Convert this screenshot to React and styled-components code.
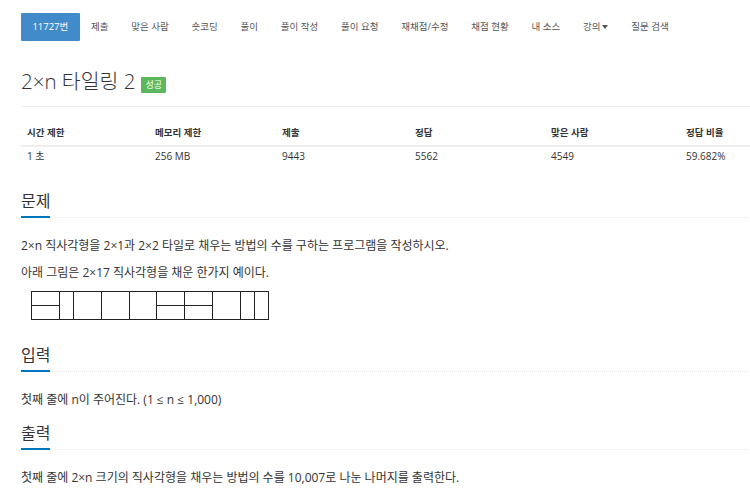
import React from "react";
import styled, { createGlobalStyle } from "styled-components";

const GlobalStyle = createGlobalStyle`
  html, body {
    margin: 0;
    padding: 0;
    background: #fff;
    overflow: hidden;
  }
  body {
    font-family: "Open Sans", "Noto Sans CJK KR", sans-serif;
    color: #333;
  }
`;

const Page = styled.div`
  width: 800px;
  padding: 13px 0 0 21px;
`;

const Menu = styled.ul`
  display: flex;
  list-style: none;
  margin: 0;
  padding: 0;
`;

const MenuItem = styled.li`
  height: 28px;
  line-height: 28px;
  padding: 0 11.4px;
  font-size: 9.5px;
  color: ${(p) => (p.$active ? "#fff" : "#555")};
  background: ${(p) => (p.$active ? "#428bca" : "transparent")};
  border-radius: 1px;
  white-space: nowrap;
`;

const Caret = styled.span`
  display: inline-block;
  margin-left: 2px;
  vertical-align: middle;
  border-top: 4px solid #555;
  border-left: 3px solid transparent;
  border-right: 3px solid transparent;
`;

const TitleBar = styled.div`
  margin-top: 26px;
  padding-bottom: 11px;
  border-bottom: 1px solid #eee;
  display: flex;
  align-items: center;
  gap: 6px;
`;

const Title = styled.h1`
  margin: 0;
  font-size: 20.5px;
  line-height: 28px;
  font-weight: 300;
  color: #333;
`;

const Badge = styled.span`
  margin-top: 8px;
  height: 16px;
  line-height: 16px;
  padding: 0 4px;
  font-size: 9px;
  color: #fff;
  background: #5cb85c;
  border-radius: 1px;
`;

const InfoTable = styled.table`
  margin-top: 13px;
  border-collapse: collapse;
  table-layout: fixed;
  width: 771px;
`;

const Th = styled.th`
  width: ${(p) => p.$w}px;
  text-align: left;
  font-size: 9.5px;
  font-weight: 700;
  padding: 6px 6px 5px;
  line-height: 14px;
  border-bottom: 2px solid #eee;
`;

const Td = styled.td`
  font-size: 10px;
  padding: 2px 6px 3px;
  line-height: 14px;
`;

const Section = styled.section`
  margin-top: ${(p) => p.$top}px;
`;

const Headline = styled.div`
  border-bottom: 1px dotted #e8e8e8;
`;

const Heading = styled.h2`
  display: inline-block;
  margin: 0 0 -1px;
  padding-bottom: 4px;
  font-size: 16px;
  line-height: 22px;
  font-weight: 400;
  color: #333;
  border-bottom: 2px solid #0076c0;
`;

const Body = styled.div`
  padding-top: 19px;
`;

const Text = styled.p`
  margin: 0 0 10px;
  font-size: 12px;
  line-height: 17px;
  color: #333;
`;

const Figure = styled.div`
  margin-left: 10px;
  line-height: 0;
`;

const menu = [
  "11727번",
  "제출",
  "맞은 사람",
  "숏코딩",
  "풀이",
  "풀이 작성",
  "풀이 요청",
  "재채점/수정",
  "채점 현황",
  "내 소스",
  "강의",
  "질문 검색",
];

// [header, value, column width without padding]
const cols = [
  ["시간 제한", "1 초", 116],
  ["메모리 제한", "256 MB", 115],
  ["제출", "9443", 121],
  ["정답", "5562", 124],
  ["맞은 사람", "4549", 123],
  ["정답 비율", "59.682%", 100],
];

// 2x17 tiling: [start unit, width units, split horizontally]
const tiles = [
  [0, 2, true],
  [2, 1, false],
  [3, 2, false],
  [5, 2, false],
  [7, 2, false],
  [9, 2, true],
  [11, 2, true],
  [13, 2, false],
  [15, 1, false],
  [16, 1, false],
];

function Tiling() {
  const u = 237 / 17;
  const x = (n) => Math.round(n * u) + 0.5;
  return (
    <svg width="239" height="30" viewBox="0 0 239 30">
      <rect x="0.5" y="0.5" width={x(17) - 0.5} height="28" fill="none" stroke="#222" />
      {tiles.map(([s, w, split]) => (
        <g key={s}>
          {s > 0 && <line x1={x(s)} y1="0.5" x2={x(s)} y2="28.5" stroke="#222" />}
          {split && <line x1={x(s)} y1="14.5" x2={x(s + w)} y2="14.5" stroke="#222" />}
        </g>
      ))}
    </svg>
  );
}

export default function App() {
  return (
    <>
      <GlobalStyle />
      <Page>
        <Menu>
          {menu.map((m, i) => (
            <MenuItem key={m} $active={i === 0}>
              {m}
              {m === "강의" && <Caret />}
            </MenuItem>
          ))}
        </Menu>

        <TitleBar>
          <Title>2×n 타일링 2</Title>
          <Badge>성공</Badge>
        </TitleBar>

        <InfoTable>
          <thead>
            <tr>
              {cols.map(([h, , w]) => (
                <Th key={h} $w={w}>
                  {h}
                </Th>
              ))}
            </tr>
          </thead>
          <tbody>
            <tr>
              {cols.map(([h, v]) => (
                <Td key={h}>{v}</Td>
              ))}
            </tr>
          </tbody>
        </InfoTable>

        <Section $top={24}>
          <Headline>
            <Heading>문제</Heading>
          </Headline>
          <Body>
            <Text>2×n 직사각형을 2×1과 2×2 타일로 채우는 방법의 수를 구하는 프로그램을 작성하시오.</Text>
            <Text>아래 그림은 2×17 직사각형을 채운 한가지 예이다.</Text>
            <Figure>
              <Tiling />
            </Figure>
          </Body>
        </Section>

        <Section $top={23}>
          <Headline>
            <Heading>입력</Heading>
          </Headline>
          <Body>
            <Text>첫째 줄에 n이 주어진다. (1 ≤ n ≤ 1,000)</Text>
          </Body>
        </Section>

        <Section $top={13.5}>
          <Headline>
            <Heading>출력</Heading>
          </Headline>
          <Body>
            <Text>첫째 줄에 2×n 크기의 직사각형을 채우는 방법의 수를 10,007로 나눈 나머지를 출력한다.</Text>
          </Body>
        </Section>
      </Page>
    </>
  );
}
